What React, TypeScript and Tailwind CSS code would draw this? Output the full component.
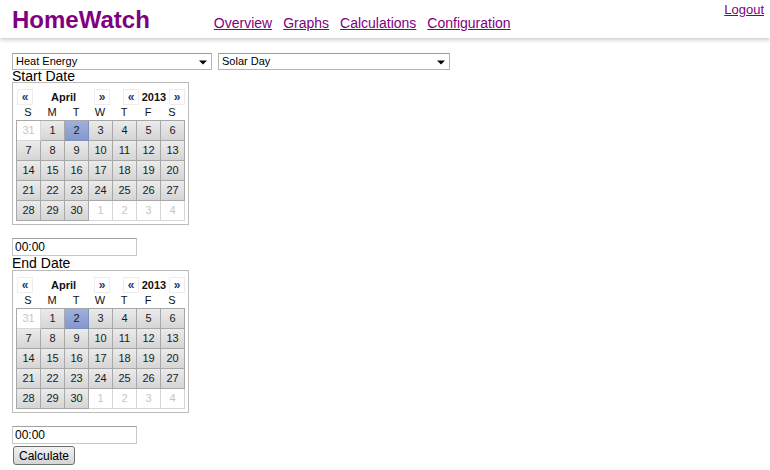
import React from "react";

const FONT = { fontFamily: '"Liberation Sans", Arial, sans-serif' };

function Arrow() {
  return (
    <svg width="8" height="5" viewBox="0 0 8 5" className="block">
      <path d="M0 0.5 L8 0.5 L4 4.5 Z" fill="#000" />
    </svg>
  );
}

function FakeSelect({ label, width }: { label: string; width: string }) {
  return (
    <div
      className={`${width} h-[17px] border border-[#b4b4b4] border-t-[#9c9c9c] bg-white flex items-center justify-between pl-[3px] pr-[4px] text-[11px] leading-[13px] text-black`}
    >
      <span>{label}</span>
      <span className="pt-[2px]">
        <Arrow />
      </span>
    </div>
  );
}

function NavBtn({ ch }: { ch: string }) {
  return (
    <div className="w-[16px] h-[16px] border border-[#ececec] flex items-center justify-center text-[12px] font-bold text-[#2b3a67] leading-none pb-[1px]">
      {ch}
    </div>
  );
}

type Cell = { n: number; out?: boolean; sel?: boolean };

const cells: Cell[] = [
  { n: 31, out: true },
  ...Array.from({ length: 30 }, (_, i) => ({ n: i + 1, sel: i + 1 === 2 })),
  { n: 1, out: true },
  { n: 2, out: true },
  { n: 3, out: true },
  { n: 4, out: true },
];

function Calendar() {
  const names = ["S", "M", "T", "W", "T", "F", "S"];
  return (
    <div className="w-[177px] border border-[#bcbcbc] pl-[3px] pr-[2px] pt-[6px] pb-[3px] bg-white">
      <div className="flex h-[16px] items-center">
        <div className="ml-[1px]">
          <NavBtn ch="«" />
        </div>
        <div className="w-[61px] text-center text-[11px] font-bold leading-[16px] text-[#111]">April</div>
        <NavBtn ch="»" />
        <div className="w-[13px]" />
        <NavBtn ch="«" />
        <div className="w-[30px] text-center text-[11px] font-bold leading-[16px] text-[#111]">2013</div>
        <NavBtn ch="»" />
      </div>
      <div className="grid grid-cols-[repeat(7,24px)] h-[15px] items-end pb-[1px]">
        {names.map((d, i) => (
          <div key={i} className="text-center text-[11px] leading-[13px] text-[#111]">
            {d}
          </div>
        ))}
      </div>
      <div className="grid grid-cols-[repeat(7,24px)] grid-rows-[repeat(5,20px)] border-l border-t border-[#a8a8a8] w-[169px]">
        {cells.map((c, i) => {
          let cls =
            "flex items-center justify-center text-[11px] leading-none border-r border-b ";
          if (c.out) cls += "bg-white border-[#d6d6d6] text-[#c6c6c6]";
          else if (c.sel)
            cls += "bg-linear-to-b from-[#9db1dc] to-[#8499cc] border-[#7e90bb] text-[#1a1a1a]";
          else
            cls += "bg-linear-to-b from-[#ebebeb] to-[#d5d5d5] border-[#a8a8a8] text-[#1a1a1a]";
          return (
            <div key={i} className={cls}>
              {c.n}
            </div>
          );
        })}
      </div>
    </div>
  );
}

function TimeInput() {
  return (
    <div className="w-[125px] h-[18px] border border-[#c8c8c8] border-t-[#a0a0a0] bg-white flex items-center pl-[2px] text-[12px] leading-[14px] text-black">
      00:00
    </div>
  );
}

export default function App() {
  return (
    <div style={FONT} className="w-[770px] h-[470px] bg-white overflow-hidden text-black">
      <header className="relative h-[38px] shadow-[0_2px_4px_rgba(0,0,0,0.2)] flex items-baseline pt-[6px] pl-[12px] pr-[6px]">
        <div className="text-[24px] font-bold leading-[28px] text-[#800080]">HomeWatch</div>
        <nav className="ml-[64px] flex gap-[11px] text-[14px] leading-[16px]">
          <a className="text-[#800080] underline">Overview</a>
          <a className="text-[#800080] underline">Graphs</a>
          <a className="text-[#800080] underline">Calculations</a>
          <a className="text-[#800080] underline">Configuration</a>
        </nav>
        <a className="ml-auto self-start -mt-[4px] text-[13px] leading-[15px] text-[#800080] underline">Logout</a>
      </header>
      <main className="px-[12px] pt-[15px]">
        <div className="flex gap-[6px]">
          <FakeSelect label="Heat Energy" width="w-[200px]" />
          <FakeSelect label="Solar Day" width="w-[232px]" />
        </div>
        <div className="text-[14px] leading-[12px] h-[12px]">Start Date</div>
        <Calendar />
        <div className="mt-[13px]">
          <TimeInput />
        </div>
        <div className="text-[14px] leading-[13px] h-[13px] mt-[1px]">End Date</div>
        <Calendar />
        <div className="mt-[13px]">
          <TimeInput />
        </div>
        <button className="mt-[2px] ml-[1px] w-[62px] h-[19px] rounded-[3px] border border-[#707070] bg-linear-to-b from-[#f2f2f2] to-[#d4d4d4] text-[12px] leading-[14px] text-black flex items-center justify-center">
          Calculate
        </button>
      </main>
    </div>
  );
}
